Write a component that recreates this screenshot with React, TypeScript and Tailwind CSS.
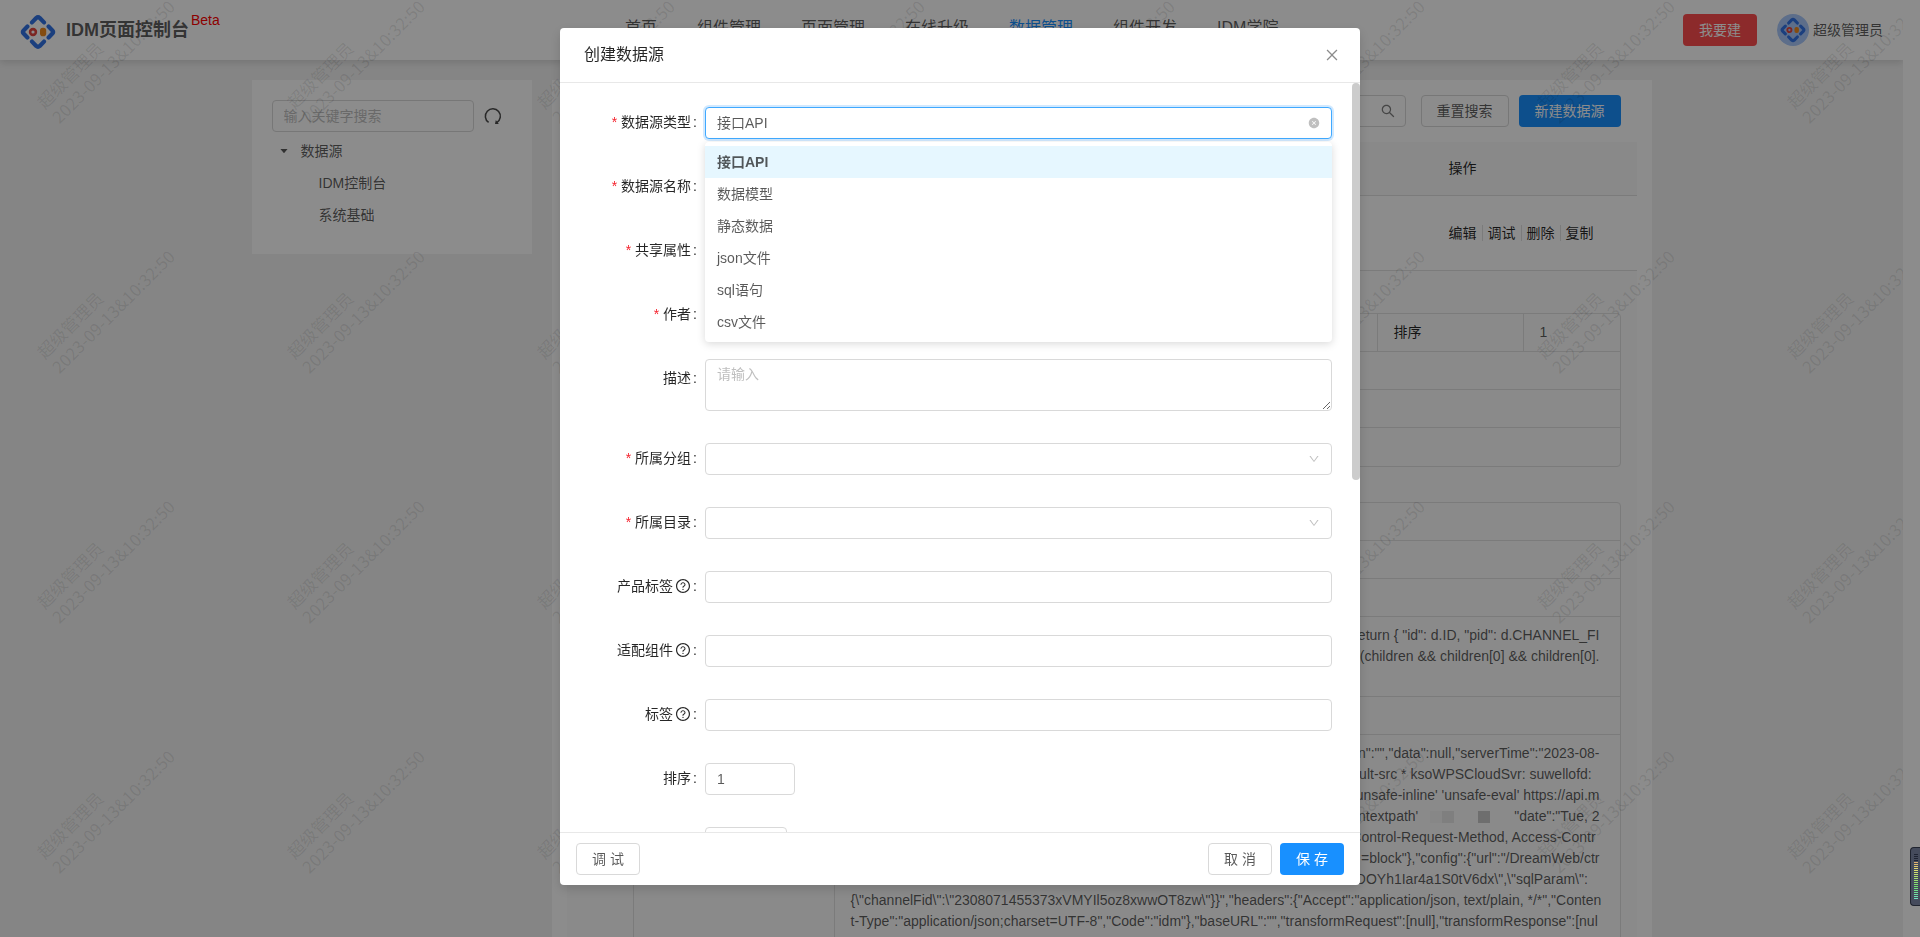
import React from "react";
import {
  AiFillCaretDown,
  AiFillCloseCircle,
  AiOutlineClose,
  AiOutlineDown,
  AiOutlineQuestionCircle,
  AiOutlineSearch,
} from "react-icons/ai";

const NAV = ["首页", "组件管理", "页面管理", "在线升级", "数据管理", "组件开发", "IDM学院"];
const OPTIONS = ["接口API", "数据模型", "静态数据", "json文件", "sql语句", "csv文件"];
const ACTIONS = ["编辑", "调试", "删除", "复制"];

const SCRIPT_LINES = [
  'return { "id": d.ID, "pid": d.CHANNEL_FI',
  "(children && children[0] && children[0].",
  " ",
];
const LOG_HEAD = [
  'n":"","data":null,"serverTime":"2023-08-',
  "default-src * ksoWPSCloudSvr: suwellofd:  ",
  "'unsafe-inline' 'unsafe-eval' https://api.m",
];
const LOG_TAIL = [
  "Control-Request-Method, Access-Contr ",
  '=block"},"config":{"url":"/DreamWeb/ctr',
  'DOYh1Iar4a1S0tV6dx\\",\\"sqlParam\\":   ',
];
const LOG_END = [
  '{\\"channelFid\\":\\"2308071455373xVMYIl5oz8xwwOT8zw\\"}}","headers":{"Accept":"application/json, text/plain, */*","Conten',
  't-Type":"application/json;charset=UTF-8","Code":"idm"},"baseURL":"","transformRequest":[null],"transformResponse":[nul',
];

function LogoMark({ className }: { className: string }) {
  return (
    <svg viewBox="0 0 36 36" className={className} fill="none" aria-hidden="true">
      <g stroke="#3273e6" strokeWidth="4.2" strokeLinecap="round" strokeLinejoin="round">
        <path d="M12 8.4 L16.2 4 Q18 2.4 19.8 4 L24 8.4" />
        <path d="M12 27.6 L16.2 32 Q18 33.6 19.8 32 L24 27.6" />
        <path d="M7.4 12.6 L3.6 16.4 Q2.2 18 3.6 19.6 L7.4 23.4" />
        <path d="M28.6 12.6 L32.4 16.4 Q33.8 18 32.4 19.6 L28.6 23.4" />
      </g>
      <circle cx="13" cy="18" r="2.9" stroke="#e2463f" strokeWidth="2.6" />
      <rect x="20" y="13.8" width="6.2" height="8.4" rx="2.8" fill="#f08a1d" />
    </svg>
  );
}

function RefreshIcon() {
  return (
    <svg viewBox="0 0 18 18" className="size-[18px]" fill="none" aria-hidden="true">
      <path d="M4.6 15.4 A7.5 7.5 0 1 1 12.8 15.6" stroke="#4a4a4a" strokeWidth="1.5" />
      <path d="M11.8 13 L14.8 17 L11 17 Z" fill="#4a4a4a" />
    </svg>
  );
}

function Watermark() {
  return (
    <div
      aria-hidden="true"
      className="pointer-events-none absolute inset-0 grid auto-rows-[250px] grid-cols-[repeat(8,250px)] overflow-hidden"
    >
      {Array.from({ length: 32 }, (_, i) => (
        <div key={i} className="pt-[97px] pl-8">
          <div className="w-44 origin-top-left -rotate-45 font-['Noto_Sans_CJK_SC',sans-serif] text-[17px] leading-[21px] whitespace-nowrap text-black/10">
            <p>超级管理员</p>
            <p>2023-09-13&amp;10:32:50</p>
          </div>
        </div>
      ))}
    </div>
  );
}

function Header() {
  return (
    <header className="relative flex h-[60px] items-center bg-white px-5 shadow-[0_2px_8px_rgba(0,0,0,0.15)]">
      <LogoMark className="mt-1 size-9" />
      <h1 className="ml-2.5 flex text-lg font-bold text-black/65">
        IDM页面控制台
        <sup className="-top-1 ml-0.5 self-start text-sm leading-4 font-normal text-[#ff0000]">Beta</sup>
      </h1>
      <nav className="absolute left-[625px] flex gap-10 pb-1 text-base">
        {NAV.map((item) => (
          <a key={item} href="#" className={item === "数据管理" ? "text-[#1890ff]" : "text-black/65"}>
            {item}
          </a>
        ))}
      </nav>
      <button className="ml-auto h-8 w-[74px] rounded bg-[#ff4d4f] text-white">我要建</button>
      <div className="ml-5 flex items-center gap-1 text-black/65">
        <span className="flex size-8 items-center justify-center rounded-full bg-[#a9c8fb]">
          <LogoMark className="size-[26px]" />
        </span>
        超级管理员
      </div>
    </header>
  );
}

function Sidebar() {
  return (
    <aside className="w-[280px] shrink-0 self-start bg-white px-5 pt-5 pb-[23px] text-black/65">
      <div className="flex items-center gap-2.5">
        <input
          aria-label="输入关键字搜索"
          placeholder="输入关键字搜索"
          className="h-8 w-[202px] rounded border border-[#d9d9d9] bg-transparent px-[11px] placeholder:text-[#bfbfbf]"
        />
        <button aria-label="刷新">
          <RefreshIcon />
        </button>
      </div>
      <ul className="mt-[3px] leading-8">
        <li>
          <span className="flex items-center gap-3 pl-[7px]">
            <AiFillCaretDown className="size-2.5" />
            数据源
          </span>
          <ul className="pl-[47px]">
            <li>IDM控制台</li>
            <li>系统基础</li>
          </ul>
        </li>
      </ul>
    </aside>
  );
}

const grid = "border-[#e0e0e0]";

function LineRow({ last }: { last?: boolean }) {
  return (
    <tr>
      <th className={`${grid} h-[38px] border-r ${last ? "" : "border-b"}`} />
      <td colSpan={3} className={`${grid} ${last ? "" : "border-b"}`} />
    </tr>
  );
}

function DetailTables() {
  return (
    <div className="flex flex-col gap-[35px] pt-[42px] pr-4 pl-[66px] leading-[21px] text-black/65">
      <table className={`${grid} w-full table-fixed border-separate border-spacing-0 rounded border`}>
        <colgroup>
          <col className="w-[201px]" />
          <col />
          <col className="w-[146px]" />
          <col className="w-24" />
        </colgroup>
        <tbody>
          <tr>
            <th className={`${grid} border-r border-b`} />
            <td className={`${grid} border-r border-b`} />
            <th className={`${grid} border-r border-b px-4 py-2 text-left font-normal text-black/85`}>排序</th>
            <td className={`${grid} border-b px-4 py-2`}>1</td>
          </tr>
          <LineRow />
          <LineRow />
          <LineRow last />
        </tbody>
      </table>
      <table className={`${grid} w-full table-fixed border-separate border-spacing-0 rounded border`}>
        <colgroup>
          <col className="w-[201px]" />
          <col />
          <col className="w-[146px]" />
          <col className="w-24" />
        </colgroup>
        <tbody>
          <LineRow />
          <LineRow />
          <LineRow />
          <tr>
            <th className={`${grid} border-r border-b`} />
            <td colSpan={3} className={`${grid} border-b py-2 pr-5 pl-4 text-right whitespace-pre`}>
              {SCRIPT_LINES.map((line, i) => (
                <p key={i}>{line}</p>
              ))}
            </td>
          </tr>
          <LineRow />
          <tr>
            <th className={`${grid} border-r`} />
            <td colSpan={3} className="py-2 pl-4 whitespace-pre">
              <div className="pr-5 text-right">
                {LOG_HEAD.map((line) => (
                  <p key={line}>{line}</p>
                ))}
                <p className="flex justify-end">
                  contextpath'
                  <span className="flex w-24 items-center pl-3">
                    <span className="h-3 w-3 bg-black/2" />
                    <span className="h-3 w-3 bg-black/8" />
                    <span className="ml-6 h-3 w-3 bg-black/20" />
                  </span>
                  {'"date":"Tue, 2'}
                </p>
                {LOG_TAIL.map((line) => (
                  <p key={line}>{line}</p>
                ))}
              </div>
              {LOG_END.map((line) => (
                <p key={line}>{line}</p>
              ))}
              <p> </p>
            </td>
          </tr>
        </tbody>
      </table>
    </div>
  );
}

function DataPanel() {
  return (
    <section className="min-w-0 flex-1 bg-white px-[15px] pt-[15px]">
      <div className="flex justify-end pr-4">
        <div className="relative w-60">
          <input aria-label="搜索" className="h-8 w-full rounded border border-[#d9d9d9] pr-8 pl-3" />
          <AiOutlineSearch className="absolute top-2 right-2.5 size-4 text-black/50" />
        </div>
        <button className="ml-[15px] h-8 rounded border border-[#d9d9d9] px-[15px] text-black/65">重置搜索</button>
        <button className="ml-2.5 h-8 rounded bg-[#1890ff] px-4 text-white">新建数据源</button>
      </div>
      <table className="mt-[15px] w-full table-fixed border-separate border-spacing-0 text-black/85">
        <colgroup>
          <col />
          <col className="w-[204px]" />
        </colgroup>
        <thead>
          <tr className="h-[54px] bg-[#fafafa]">
            <th className="border-b border-[#e0e0e0]" />
            <th className="border-b border-[#e0e0e0] pl-4 text-left font-normal">操作</th>
          </tr>
        </thead>
        <tbody>
          <tr className="h-[75px]">
            <td className="border-b border-[#e0e0e0]" />
            <td className="border-b border-[#e0e0e0] pl-4">
              <div className="flex">
                {ACTIONS.map((action, i) => (
                  <a
                    key={action}
                    href="#"
                    className={
                      i === 0 ? "pr-[5px] leading-4" : "border-l border-[#e0e0e0] px-[5px] leading-4"
                    }
                  >
                    {action}
                  </a>
                ))}
              </div>
            </td>
          </tr>
          <tr className="bg-[#fbfbfb]">
            <td colSpan={2}>
              <DetailTables />
            </td>
          </tr>
        </tbody>
      </table>
    </section>
  );
}

interface FieldProps {
  id: string;
  label: string;
  required?: boolean;
  help?: boolean;
  tight?: boolean;
  children: React.ReactNode;
}

function Field({ id, label, required, help, tight, children }: FieldProps) {
  return (
    <div className={`flex items-start gap-2 ${tight ? "mb-7" : "mb-8"}`}>
      <label htmlFor={id} className="flex h-[30px] w-[121px] shrink-0 items-center justify-end text-black/85">
        {required && <span className="mr-1 text-[#f5222d]">*</span>}
        {label}
        {help && <AiOutlineQuestionCircle className="ml-0.5 size-4" />}
        <span className="ml-0.5">:</span>
      </label>
      <div className="relative min-w-0 flex-1">{children}</div>
    </div>
  );
}

const box = "block h-8 w-full appearance-none rounded border border-[#d9d9d9] bg-white px-[11px] text-black/65";

function SelectBox({ id }: { id: string }) {
  return (
    <>
      <select id={id} className={box} />
      <AiOutlineDown className="pointer-events-none absolute top-2.5 right-3 size-3 text-black/25" />
    </>
  );
}

function CreateDialog() {
  const plain = "h-8 w-16 rounded border border-[#d9d9d9] bg-white text-black/65";
  return (
    <div className="fixed inset-0 flex justify-center bg-black/45 pt-7 pb-[52px]">
      <div
        role="dialog"
        aria-labelledby="dialog-title"
        className="flex w-[800px] flex-col overflow-hidden rounded bg-white shadow-[0_4px_12px_rgba(0,0,0,0.15)]"
      >
        <div className="flex h-[55px] shrink-0 items-center justify-between border-b border-[#e8e8e8] pr-5 pl-6">
          <h2 id="dialog-title" className="text-base text-black/85">
            创建数据源
          </h2>
          <button aria-label="关闭" className="text-black/45">
            <AiOutlineClose className="size-4" />
          </button>
        </div>
        <div className="flex min-h-0 flex-1">
          <form className="min-w-0 flex-1 overflow-hidden pt-6 pr-5 pl-4">
            <Field id="type" label="数据源类型" required>
              <select
                id="type"
                defaultValue="接口API"
                className="block h-8 w-full appearance-none rounded border border-[#40a9ff] bg-white px-[11px] text-black/65 shadow-[0_0_0_2px_rgba(24,144,255,0.2)] outline-none"
              >
                {OPTIONS.map((option) => (
                  <option key={option}>{option}</option>
                ))}
              </select>
              <button type="button" aria-label="清除" className="absolute top-2.5 right-3 text-black/25">
                <AiFillCloseCircle className="size-3" />
              </button>
              <ul
                role="listbox"
                aria-label="数据源类型"
                className="absolute top-[35px] z-10 w-full rounded bg-white py-1 leading-8 text-black/65 shadow-[0_2px_8px_rgba(0,0,0,0.15)]"
              >
                {OPTIONS.map((option, i) => (
                  <li
                    key={option}
                    role="option"
                    aria-selected={i === 0}
                    className={i === 0 ? "bg-[#e6f7ff] px-3 font-semibold" : "px-3"}
                  >
                    {option}
                  </li>
                ))}
              </ul>
            </Field>
            <Field id="name" label="数据源名称" required>
              <input id="name" className={box} />
            </Field>
            <Field id="share" label="共享属性" required>
              <SelectBox id="share" />
            </Field>
            <Field id="author" label="作者" required tight>
              <input id="author" className={box} />
            </Field>
            <div className="mb-8 flex items-start gap-2">
              <label htmlFor="desc" className="flex h-[38px] w-[121px] shrink-0 items-center justify-end text-black/85">
                描述<span className="ml-0.5">:</span>
              </label>
              <textarea
                id="desc"
                placeholder="请输入"
                className="block h-[52px] min-w-0 flex-1 resize rounded border border-[#d9d9d9] px-[11px] py-1 leading-[21px] placeholder:text-[#bfbfbf]"
              />
            </div>
            <Field id="group" label="所属分组" required>
              <SelectBox id="group" />
            </Field>
            <Field id="catalog" label="所属目录" required>
              <SelectBox id="catalog" />
            </Field>
            <Field id="product" label="产品标签" help>
              <input id="product" className={box} />
            </Field>
            <Field id="component" label="适配组件" help>
              <input id="component" className={box} />
            </Field>
            <Field id="tag" label="标签" help>
              <input id="tag" className={box} />
            </Field>
            <Field id="order" label="排序">
              <div className="w-[90px]">
                <input id="order" defaultValue="1" className={box} />
              </div>
            </Field>
            <div className="flex gap-2">
              <span className="w-[121px]" />
              <div className="w-[82px]">
                <input aria-label="版本" className={box} />
              </div>
            </div>
          </form>
          <div className="w-2 shrink-0">
            <div className="h-[53%] rounded bg-[#cccccc]" />
          </div>
        </div>
        <div className="flex h-[53px] shrink-0 items-center gap-2 border-t border-[#e8e8e8] px-4">
          <button className={plain}>调 试</button>
          <button className={`${plain} ml-auto`}>取 消</button>
          <button className="h-8 w-16 rounded bg-[#1890ff] text-white">保 存</button>
        </div>
      </div>
    </div>
  );
}

function LevelMeter() {
  return (
    <div className="fixed right-0 bottom-[31px] h-[59px] w-2.5 rounded-l border border-r-0 border-[#20242f] bg-[#454b5c] pt-1.5 pl-[3px]">
      <svg viewBox="0 0 4 46" className="h-[46px] w-1" aria-hidden="true">
        {Array.from({ length: 23 }, (_, i) => (
          <rect
            key={i}
            x="0"
            y={i * 2}
            width="4"
            height="1"
            fill={i < 4 ? "#1f2433" : `hsl(${35 + (i - 4) * 7}, 65%, 66%)`}
          />
        ))}
      </svg>
    </div>
  );
}

export default function App() {
  return (
    <div className="flex h-screen overflow-hidden bg-white font-['Liberation_Sans','Noto_Sans_CJK_SC',sans-serif] text-sm leading-[21px]">
      <div className="relative min-w-0 flex-1 overflow-hidden bg-[#f3f3f3]">
        <Header />
        <main className="mx-auto mt-5 flex max-w-[1400px] gap-5">
          <Sidebar />
          <DataPanel />
        </main>
        <Watermark />
      </div>
      <div className="w-[17px] shrink-0 bg-white" />
      <CreateDialog />
      <LevelMeter />
    </div>
  );
}
